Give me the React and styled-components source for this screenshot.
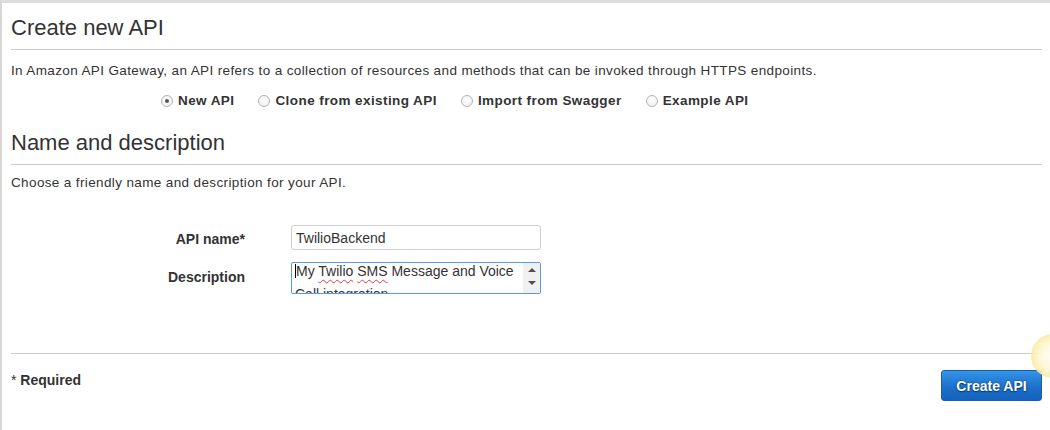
import React from "react";
import styled, { createGlobalStyle } from "styled-components";

const Global = createGlobalStyle`
  html, body { margin: 0; padding: 0; background: #fff; overflow: hidden; }
  body { font-family: "Liberation Sans", Arial, sans-serif; color: #333; }
  * { box-sizing: border-box; }
`;

const Page = styled.div`
  position: relative;
  width: 1050px;
  height: 430px;
  overflow: hidden;
  border-top: 3px solid #dedede;
  border-left: 2px solid #d6d6d6;
  padding: 0 8px 0 9px;
`;

const Heading = styled.h2`
  margin: ${(p) => p.$top}px 0 0;
  font-size: 22px;
  font-weight: normal;
  line-height: 25px;
  color: #333;
  padding-bottom: 9px;
  border-bottom: 1px solid #cccccc;
`;

const Para = styled.p`
  margin: ${(p) => p.$top}px 0 0;
  font-size: 13.5px;
  letter-spacing: 0.37px;
  line-height: 15px;
  color: #333;
`;

const RadioRow = styled.div`
  display: flex;
  align-items: center;
  margin-top: 15px;
  padding-left: 150px;
  height: 15px;
`;

const RadioOption = styled.label`
  display: inline-flex;
  align-items: center;
  gap: 5px;
  margin-right: 24px;
  font-size: 13.5px;
  letter-spacing: 0.42px;
  font-weight: bold;
  color: #333;
`;

const RadioDot = styled.span`
  width: 12px;
  height: 12px;
  border-radius: 50%;
  border: 1px solid #b4b4b4;
  background: radial-gradient(circle at 50% 40%, #ffffff 0%, #ececec 100%);
  display: inline-flex;
  align-items: center;
  justify-content: center;
  &::after {
    content: "";
    width: 4px;
    height: 4px;
    border-radius: 50%;
    background: ${(p) => (p.$checked ? "#555" : "transparent")};
  }
`;

const Form = styled.div`
  display: grid;
  grid-template-columns: 234px 250px;
  column-gap: 46px;
  row-gap: 12px;
  align-items: center;
  margin-top: 35px;
`;

const Label = styled.div`
  text-align: right;
  font-size: 14px;
  font-weight: bold;
  color: #333;
  line-height: 16px;
  margin-top: ${(p) => p.$shift || 0}px;
`;

const Input = styled.input`
  width: 250px;
  height: 25px;
  border: 1px solid #cfcfcf;
  border-radius: 3px;
  padding: 0 4px;
  font-family: "Liberation Sans", Arial, sans-serif;
  font-size: 14px;
  color: #333;
  outline: none;
  background: #fff;
`;

const TextArea = styled.div`
  width: 250px;
  height: 32px;
  border: 1px solid #5a9be0;
  border-radius: 2px;
  display: flex;
  overflow: hidden;
  background: #fff;
`;

const TextContent = styled.div`
  flex: 1;
  overflow: hidden;
  padding: 0 0 0 3px;
  font-size: 14px;
  line-height: 23px;
  color: #333;
  margin-top: -3px;
`;

const Caret = styled.span`
  display: inline-block;
  width: 1px;
  height: 14px;
  background: #000;
  vertical-align: -2px;
`;

const Misspelled = styled.span`
  text-decoration: underline wavy #e04040;
  text-decoration-thickness: 1px;
  text-underline-offset: 3px;
`;

const ScrollBar = styled.div`
  width: 17px;
  background: #f0f0f0;
  display: flex;
  flex-direction: column;
  align-items: center;
  justify-content: space-between;
  padding: 5px 0 8px;
`;

const Arrow = styled.span`
  width: 0;
  height: 0;
  border-left: 4px solid transparent;
  border-right: 4px solid transparent;
  ${(p) =>
    p.$up
      ? "border-bottom: 4px solid #505050;"
      : "border-top: 4px solid #505050;"}
`;

const Divider = styled.div`
  margin-top: 59px;
  height: 1px;
  background: #cccccc;
`;

const Footer = styled.div`
  display: flex;
  justify-content: space-between;
  align-items: flex-start;
  padding-top: 16px;
`;

const Required = styled.div`
  margin-top: 2px;
  font-size: 14px;
  line-height: 16px;
  color: #333;
  b { font-weight: bold; }
`;

const PrimaryButton = styled.button`
  width: 101px;
  height: 31px;
  border: 1px solid #1b5ea8;
  border-radius: 3px;
  background: linear-gradient(#3593e8, #1b6ec9 60%, #1462bd);
  color: #fff;
  font-family: "Liberation Sans", Arial, sans-serif;
  font-size: 14px;
  font-weight: bold;
  text-shadow: 0 0 2px #0a3a70, 0 1px 1px #0a3a70;
  padding: 0;
  cursor: pointer;
`;

const Highlight = styled.div`
  position: absolute;
  left: 1029px;
  top: 331px;
  width: 44px;
  height: 44px;
  border-radius: 50%;
  background: radial-gradient(
    circle,
    #fffef6 0%,
    #fff7d2 45%,
    #fbe79a 75%,
    #f3d26a 100%
  );
  opacity: 0.9;
  pointer-events: none;
`;

export default function App() {
  return (
    <>
      <Global />
      <Page>
        <Heading $top={12}>Create new API</Heading>
        <Para $top={13}>
          In Amazon API Gateway, an API refers to a collection of resources and
          methods that can be invoked through HTTPS endpoints.
        </Para>
        <RadioRow>
          <RadioOption>
            <RadioDot $checked />
            New API
          </RadioOption>
          <RadioOption>
            <RadioDot />
            Clone from existing API
          </RadioOption>
          <RadioOption>
            <RadioDot />
            Import from Swagger
          </RadioOption>
          <RadioOption>
            <RadioDot />
            Example API
          </RadioOption>
        </RadioRow>

        <Heading $top={22}>Name and description</Heading>
        <Para $top={10}>Choose a friendly name and description for your API.</Para>

        <Form>
          <Label $shift={2}>API name*</Label>
          <Input readOnly value="TwilioBackend" />
          <Label $shift={-2}>Description</Label>
          <TextArea>
            <TextContent>
              <Caret />
              My <Misspelled>Twilio</Misspelled> <Misspelled>SMS</Misspelled>{" "}
              Message and Voice Call integration
            </TextContent>
            <ScrollBar>
              <Arrow $up />
              <Arrow />
            </ScrollBar>
          </TextArea>
        </Form>

        <Divider />
        <Footer>
          <Required>
            * <b>Required</b>
          </Required>
          <PrimaryButton>Create API</PrimaryButton>
        </Footer>

        <Highlight />
      </Page>
    </>
  );
}
